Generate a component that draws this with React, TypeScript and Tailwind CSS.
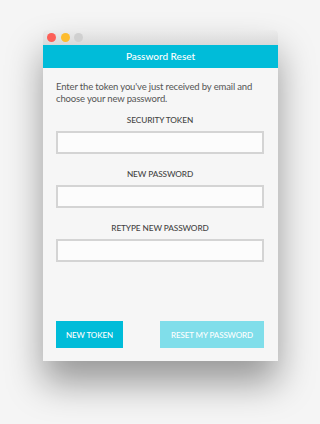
const Field = ({ label, first }: { label: string; first?: boolean }) => (
  <div className={first ? "mt-[10px]" : "mt-[15px]"}>
    <div className="text-center text-[8.25px] leading-[10px] font-medium tracking-[-0.1px] text-[#444]">{label}</div>
    <input
      type="text"
      className="mt-[6px] block h-[23px] w-full border-2 border-[#d4d4d4] bg-[#fcfcfc] outline-none"
    />
  </div>
);

export default function App() {
  return (
    <div
      className="w-[320px] h-[424px] bg-[#f5f5f5] pt-[30px] pl-[43px]"
      style={{ fontFamily: "Lato, 'Open Sans', sans-serif" }}
    >
      <div className="flex h-[331px] w-[235px] flex-col rounded-t-[4px] bg-[#f6f6f6] shadow-[0_22px_36px_rgba(0,0,0,0.38)]">
        <div className="flex h-[15px] items-center gap-[4.5px] rounded-t-[4px] bg-gradient-to-b from-[#ececec] to-[#d9d9d9] pl-[4px]">
          <span className="h-[9px] w-[9px] rounded-full bg-[#fc5f57]" />
          <span className="h-[9px] w-[9px] rounded-full bg-[#fdbc2e]" />
          <span className="h-[9px] w-[9px] rounded-full bg-[#d0d0d0]" />
        </div>
        <div className="flex h-[23px] items-center justify-center bg-[#00bcd9] text-[10px] font-medium text-white">
          Password Reset
        </div>
        <div className="flex flex-1 flex-col px-[14px] pt-[13px] pb-[13px] pl-[13px]">
          <p className="text-[9.5px] leading-[12px] tracking-[-0.15px] text-[#555]">
            Enter the token you've just received by email and choose your new password.
          </p>
          <Field label="SECURITY TOKEN" first />
          <Field label="NEW PASSWORD" />
          <Field label="RETYPE NEW PASSWORD" />
          <div className="flex-1" />
          <div className="flex items-center justify-between">
            <button className="h-[27px] w-[67px] bg-[#00bcd9] text-[8px] font-medium tracking-[-0.1px] text-white">
              NEW TOKEN
            </button>
            <button className="h-[27px] w-[104px] bg-[#80deea] text-[8px] font-medium tracking-[-0.1px] text-white">
              RESET MY PASSWORD
            </button>
          </div>
        </div>
      </div>
    </div>
  );
}
